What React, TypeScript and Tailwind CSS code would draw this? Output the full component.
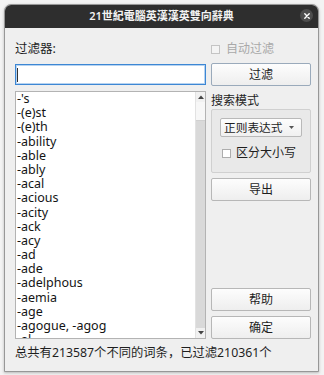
const words = [
  "-'s",
  '-(e)st',
  '-(e)th',
  '-ability',
  '-able',
  '-ably',
  '-acal',
  '-acious',
  '-acity',
  '-ack',
  '-acy',
  '-ad',
  '-ade',
  '-adelphous',
  '-aemia',
  '-age',
  '-agogue, -agog',
  '-al',
]

const font = "font-['Noto_Sans','Noto_Sans_CJK_SC',sans-serif]"

function Button(props: { label: string; primary?: boolean }) {
  return (
    <button
      type="button"
      className={
        'flex h-[23px] w-full items-center justify-center rounded-[2px] border bg-gradient-to-b from-[#fdfdfd] to-[#eeeeee] text-[12px] text-[#1e1e1e] ' +
        (props.primary ? 'border-[#9aaabb]' : 'border-[#b7b7b7]')
      }
    >
      {props.label}
    </button>
  )
}

export default function App() {
  return (
    <div className={'h-[375px] w-[324px] overflow-hidden bg-[#f3f3f3] pl-[4px] pt-[4px] ' + font}>
      <div className="flex h-[368px] w-[315px] flex-col overflow-hidden rounded-t-[7px] border border-[#979797] bg-[#efefef] shadow-[0_1px_3px_rgba(0,0,0,0.25)]">
        {/* title bar */}
        <div className="relative flex h-[23px] shrink-0 items-center justify-center bg-[#2e2e2e]">
          <span className="text-[11px] font-semibold text-[#f2f2f2]">21世紀電腦英漢漢英雙向辭典</span>
          <div className="absolute right-[5px] top-[4px] flex h-[13px] w-[13px] items-center justify-center rounded-full bg-[#4d4d4d]">
            <svg width="6" height="6" viewBox="0 0 6 6">
              <path d="M0.8 0.8 L5.2 5.2 M5.2 0.8 L0.8 5.2" stroke="#fff" strokeWidth="1.4" strokeLinecap="round" />
            </svg>
          </div>
        </div>

        <div className="flex flex-1 flex-col pl-[10px] pt-[12px]">
          {/* filter label row */}
          <div className="flex h-[18px] w-[296px] items-center justify-between">
            <span className="text-[12.5px] text-[#1e1e1e]">过滤器:</span>
            <label className="flex w-[100px] items-center gap-[6px] text-[12px] text-[#a9a9a9]">
              <span className="block h-[9px] w-[9px] border border-[#c4c4c4] bg-[#f4f4f4]" />
              自动过滤
            </label>
          </div>

          {/* input row */}
          <div className="mt-[5px] flex h-[23px] w-[296px] items-center gap-[5px]">
            <div className="flex h-[21px] w-[191px] items-center border border-[#3d87d4] bg-white pl-[1px] shadow-[inset_0_0_0_1px_#b6d3f1]">
              <span className="block h-[14px] w-[1px] bg-[#333]" />
            </div>
            <div className="w-[100px]">
              <Button label="过滤" primary />
            </div>
          </div>

          {/* main area */}
          <div className="mt-[5px] flex h-[248px] w-[296px] gap-[5px]">
            <div className="flex w-[191px] border border-[#b3b3b3] bg-white">
              <div className="flex-1 overflow-hidden pl-[1px]">
                {words.map((w) => (
                  <div key={w} className="h-[14.2px] whitespace-nowrap text-[12.5px] leading-[14.2px] text-[#141414]">
                    {w}
                  </div>
                ))}
              </div>
              <div className="flex w-[10px] flex-col border-l border-[#e2e2e2] bg-[#d9d9d9]">
                <div className="flex h-[10px] items-center justify-center bg-[#f1f1f1]">
                  <svg width="6" height="4" viewBox="0 0 6 4">
                    <path d="M0 4 L3 0.5 L6 4 Z" fill="#444" />
                  </svg>
                </div>
                <div className="h-[19px] border-b border-[#d0d0d0] bg-[#f7f7f7]" />
                <div className="flex-1" />
                <div className="flex h-[10px] items-center justify-center bg-[#f1f1f1]">
                  <svg width="6" height="4" viewBox="0 0 6 4">
                    <path d="M0 0 L3 3.5 L6 0 Z" fill="#444" />
                  </svg>
                </div>
              </div>
            </div>

            <div className="flex w-[100px] flex-col">
              <div className="mt-[2px] h-[16px] text-[12px] leading-[16px] text-[#1e1e1e]">搜索模式</div>
              <div className="flex h-[64px] flex-col rounded-[2px] border border-[#d0d0d0] bg-[#e9e9e9] px-[8px] pt-[8px]">
                <div className="flex h-[19px] items-center justify-between rounded-[2px] border border-[#b9b9b9] bg-gradient-to-b from-[#fdfdfd] to-[#f0f0f0] pl-[3px] pr-[7px] text-[11.7px] text-[#1e1e1e]">
                  <span>正则表达式</span>
                  <svg width="5" height="3" viewBox="0 0 5 3">
                    <path d="M0 0 L2.5 3 L5 0 Z" fill="#555" />
                  </svg>
                </div>
                <label className="mt-[8px] flex h-[16px] items-center gap-[5px] pl-[2px] text-[12px] text-[#1e1e1e]">
                  <span className="block h-[9px] w-[9px] border border-[#adadad] bg-white" />
                  区分大小写
                </label>
              </div>
              <div className="mt-[5px]">
                <Button label="导出" />
              </div>
              <div className="flex-1" />
              <Button label="帮助" />
              <div className="mt-[5px]">
                <Button label="确定" />
              </div>
            </div>
          </div>

          {/* status */}
          <div className="mt-[6px] h-[16px] whitespace-nowrap text-[12.3px] leading-[16px] text-[#1e1e1e]">
            总共有213587个不同的词条，已过滤210361个
          </div>
        </div>
      </div>
    </div>
  )
}
